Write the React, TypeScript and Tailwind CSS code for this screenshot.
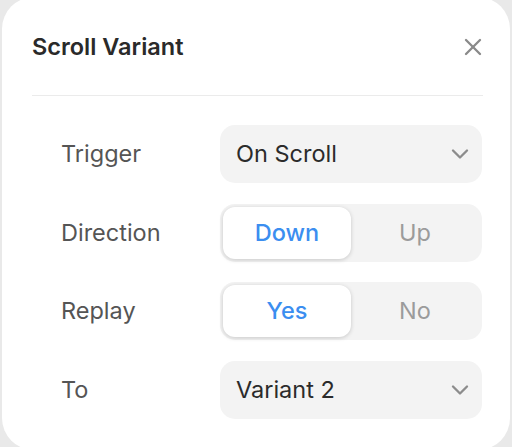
import { ChevronDown, X } from "lucide-react";

function Select({ value }: { value: string }) {
  return (
    <div className="flex h-[58px] flex-1 items-center justify-between rounded-[15px] bg-[#f3f3f3] pl-[16px] pr-[8px]">
      <span className="text-[23.5px] text-[#2b2b2b]">{value}</span>
      <ChevronDown className="h-[28px] w-[28px] text-[#8c8c8c]" strokeWidth={2} />
    </div>
  );
}

function Segmented({ options, active }: { options: string[]; active: number }) {
  return (
    <div className="flex h-[58px] flex-1 rounded-[15px] bg-[#f3f3f3] p-[3px]">
      {options.map((o, i) => (
        <div
          key={o}
          className={
            i === active
              ? "flex flex-1 items-center justify-center rounded-[12px] bg-white text-[23.5px] font-medium text-[#3b8ef0] shadow-[0_1px_4px_rgba(0,0,0,0.18)]"
              : "flex flex-1 items-center justify-center text-[23.5px] text-[#9b9b9b]"
          }
        >
          {o}
        </div>
      ))}
    </div>
  );
}

function Row({ label, children }: { label: string; children: React.ReactNode }) {
  return (
    <div className="flex h-[58px] items-center">
      <span className="w-[159px] text-[23.5px] text-[#555555]">{label}</span>
      {children}
    </div>
  );
}

export default function App() {
  return (
    <div className="h-[447px] overflow-hidden bg-[#e9e9e9] px-[2px] font-['Inter',sans-serif]">
      <div className="-mt-[3px] h-[453px] rounded-[32px] bg-white pl-[30px] pr-[27px] pt-[36px]">
        <div className="flex h-[28px] items-center justify-between">
          <h1 className="text-[23.5px] font-semibold text-[#2a2a2a]">Scroll Variant</h1>
          <X className="-mr-[4px] h-[28px] w-[28px] text-[#8a8a8a]" strokeWidth={2} />
        </div>
        <div className="mt-[34px] h-px bg-[#ebebeb]" />
        <div className="mt-[29px] flex flex-col gap-[20.5px] pl-[29px] pr-px">
          <Row label="Trigger">
            <Select value="On Scroll" />
          </Row>
          <Row label="Direction">
            <Segmented options={["Down", "Up"]} active={0} />
          </Row>
          <Row label="Replay">
            <Segmented options={["Yes", "No"]} active={0} />
          </Row>
          <Row label="To">
            <Select value="Variant 2" />
          </Row>
        </div>
      </div>
    </div>
  );
}
